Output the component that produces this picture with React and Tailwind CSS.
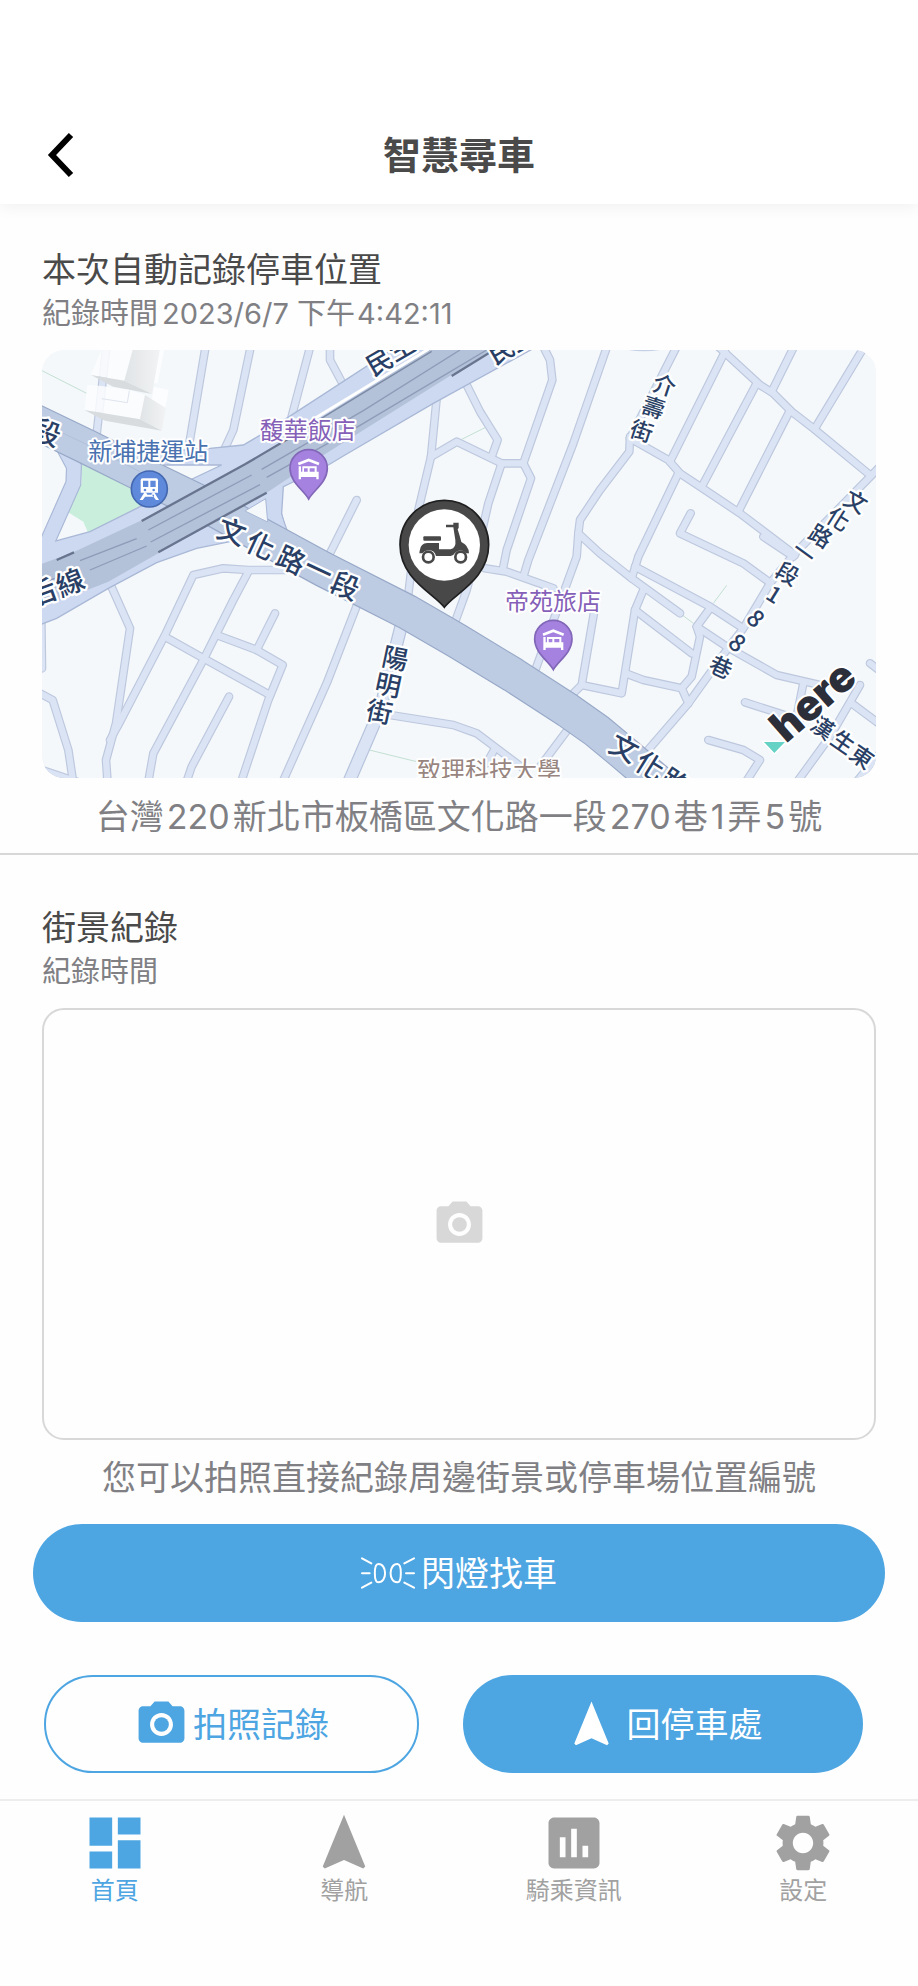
import React from "react";
import {
  MdAssessment,
  MdDashboard,
  MdNavigation,
  MdPhotoCamera,
  MdSettings,
} from "react-icons/md";

const MINOR_STREETS = [
  "525,30 478,310",
  "660,30 610,270 580,335",
  "838,30 785,230",
  "228,30 198,300",
  "900,20 900,60 940,135",
  "1220,175 1203,350 1165,510 1133,780",
  "1203,350 1280,305 1415,370 1480,370",
  "1305,125 1350,215 1403,300 1385,350",
  "1540,20 1560,60 1567,120 1480,370 1503,415 1430,630 1418,690",
  "1415,370 1375,490 1350,600 1310,750 1270,860",
  "1731,20 1630,310 1495,660 1480,710",
  "1800,290 1798,335 1710,450 1650,540 1645,580 1710,640 1805,715 1950,820",
  "1645,580 1640,650 1600,760 1505,1020",
  "980,480 895,650",
  "1940,20 1800,295",
  "2085,35 1920,365",
  "2180,130 2018,435",
  "2278,215 2125,515",
  "2065,20 2190,135 2230,160 2285,215 2350,265 2520,405",
  "2292,20 2225,155",
  "2500,25 2355,265",
  "1800,295 1915,360 1950,400 2010,440 2130,520 2295,645",
  "1945,400 1825,650 1805,715",
  "1982,520 1950,580 2140,670 2220,728",
  "2550,380 2290,645 2220,730 2140,865 2090,930 1975,1090 1850,1235",
  "2200,590 2290,650",
  "1815,680 2040,800 2135,862",
  "1840,750 1815,810 1775,1060 1655,1035",
  "1815,810 1985,940",
  "2040,805 2000,860 2010,890 1985,1010 1955,1045 1975,1090",
  "1787,1000 1840,1020 1955,1045",
  "2000,860 2090,920 2240,1005 2370,1035",
  "2320,1030 2300,1130",
  "2145,1087 2310,1140",
  "2035,1200 2140,1230 2190,1260 2145,1330",
  "2490,1035 2400,1190 2298,1330",
  "2465,1090 2550,1153",
  "2520,970 2560,1000",
  "2550,1240 2480,1325",
  "1365,685 1430,695 1570,745",
  "1695,800 1655,1035 1610,1080",
  "985,785 890,1030 756,1330",
  "1080,1125 1270,1155 1340,1180 1480,1285",
  "1620,1160 1530,1280",
  "1395,1225 1370,1270",
  "242,735 300,865 258,1150 228,1260 233,1330",
  "780,690 655,690 580,685 490,705 405,885 265,1155 240,1200",
  "655,695 610,780 520,960 370,1240 354,1330",
  "405,890 520,955 720,1065",
  "560,885 680,930 758,975 715,1080 632,1330",
  "735,820 680,930",
  "597,1070 485,1280 468,1330",
  "30,1060 68,1080 115,1230 130,1330",
  "34,850 36,985",
  "20,1285 170,1335",
];

const ARTERIAL =
  "0,238 170,320 340,405 560,512 700,590 880,688 1130,815 1280,902 1450,1005 1615,1112 1700,1172 1770,1230 1900,1340";

const LIGHT_ROAD =
  "36,625 70,605 180,575 320,505 480,420 575,375 380,375 380,335 540,325 640,315 700,280 870,170 1100,20 1520,20 1210,190 945,345 895,375 760,440 755,520 770,585 600,605 500,625 380,668 235,745 80,835 20,858 20,625";

const STREET_LABELS = [
  ["段", 50, 278, 20, 84],
  ["后", 36, 757, -20, 84],
  ["線", 120, 727, -22, 84],
  ["民", 1050, 68, -30, 78],
  ["生", 1115, 24, -30, 78],
  ["民", 1415, 34, -30, 78],
  ["生", 1480, -4, -30, 78],
  ["文", 605, 575, 20, 84],
  ["化", 692, 617, 25, 84],
  ["路", 783, 660, 25, 84],
  ["一", 866, 690, 25, 84],
  ["段", 945, 738, 22, 84],
  ["介", 1903, 135, 18, 68],
  ["壽", 1870, 202, 18, 68],
  ["街", 1835, 272, 18, 68],
  ["文", 2478, 484, 30, 68],
  ["化", 2425, 537, 32, 68],
  ["路", 2372, 588, 32, 68],
  ["一", 2322, 638, 36, 68],
  ["段", 2273, 700, 30, 68],
  ["1", 2233, 762, 32, 68],
  ["8", 2177, 835, 45, 72],
  ["8", 2122, 908, 40, 72],
  ["巷", 2073, 981, 24, 68],
  ["陽", 1095, 958, 12, 78],
  ["明", 1074, 1038, 12, 78],
  ["街", 1048, 1118, 12, 78],
  ["文", 1783, 1224, 28, 84],
  ["化", 1860, 1278, 32, 84],
  ["路", 1935, 1328, 34, 84],
  ["漢", 2378, 1162, 35, 68],
  ["生", 2440, 1206, 35, 68],
  ["東", 2496, 1250, 35, 68],
];

function HotelPin({ x, y }) {
  return (
    <g transform={`translate(${x} ${y})`}>
      <path
        d="M0 92 C-14 66 -56 42 -56 0 A56 56 0 0 1 56 0 C56 42 14 66 0 92Z"
        fill="#a582e0"
        stroke="#8266b8"
        strokeWidth="5"
      />
      <path d="M-31 -13 L0 -25 L31 -13" fill="none" stroke="#fff" strokeWidth="8" />
      <path
        d="M-30 33 V-6 H-23 V10 H-19 V-6 H24 V10 H30 V33 H23 V26 H-23 V33Z"
        fill="#fff"
      />
      <path d="M-14 0 H-3 V10 H-14Z M3 0 H18 V10 H3Z" fill="#a582e0" />
    </g>
  );
}

function ParkingMap() {
  return (
    <svg
      role="img"
      aria-label="停車位置地圖"
      viewBox="36 30 2502 1284"
      preserveAspectRatio="xMidYMid slice"
      className="block aspect-[834/428] w-full rounded-[22px] font-['Noto_Sans_CJK_TC',sans-serif]"
    >
      <rect x="36" y="30" width="2502" height="1284" fill="#f4f8fb" />

      <g fill="none" stroke="#c3e0d2" strokeWidth="3">
        <path d="M36 92 L170 160 M1295 298 L1365 263 M2090 736 L2050 790 M1950 820 L1990 850 M1018 1230 L1160 1265" />
      </g>
      <path d="M1795 30 Q1840 38 1890 30Z" fill="#c3d0e6" />

      <g fill="none" stroke="#bdc8de" strokeWidth="26" strokeLinecap="round" strokeLinejoin="round">
        {MINOR_STREETS.map((points) => (
          <polyline key={points} points={points} />
        ))}
      </g>
      <polyline points="1118,840 1050,1110 955,1330" fill="none" stroke="#b6c3dc" strokeWidth="40" />
      <g fill="none" stroke="#dbe4f4" strokeWidth="19" strokeLinecap="round" strokeLinejoin="round">
        {MINOR_STREETS.map((points) => (
          <polyline key={points} points={points} />
        ))}
      </g>
      <polyline points="1118,840 1050,1110 955,1330" fill="none" stroke="#dbe4f4" strokeWidth="33" />

      <path
        d="M155 370 L300 445 L350 488 L175 580 L160 545 L113 516 L155 430Z"
        fill="#c9efdc"
      />

      <g fill="none" stroke="#a9b8d6">
        <polyline points="100,320 132,380 130,430 50,610 30,680" strokeWidth="48" />
        <polyline points="732,420 728,520 752,590" strokeWidth="52" />
      </g>
      <polygon points={LIGHT_ROAD} fill="#cdd9f1" stroke="#a9b8d6" strokeWidth="4" />
      <g fill="none" stroke="#cdd9f1">
        <polyline points="100,320 132,380 130,430 50,610 30,680" strokeWidth="41" />
        <polyline points="732,420 728,520 752,590" strokeWidth="45" />
      </g>

      <g fill="none" strokeLinejoin="round">
        <polyline points={ARTERIAL} stroke="#98a9c8" strokeWidth="108" />
        <polyline points={ARTERIAL} stroke="#becce3" strokeWidth="101" />
      </g>
      <polygon points="645,513 707,476 713,546" fill="#f4f8fb" stroke="#a9b8d6" strokeWidth="3" />
      <path d="M36 250 L180 318 M210 335 L330 395" stroke="#b0bfd8" strokeWidth="3" />

      <polygon
        points="20,677 130,637 335,541 640,375 870,235 1195,30 1215,20 1400,20 870,352 710,458 385,640 235,725 120,770 20,805"
        fill="#b3c1d9"
      />
      <g fill="none" stroke="#8e9cb7" strokeWidth="4">
        <path d="M150 662 L320 596 M180 690 L350 618 M355 570 L665 405 M362 606 L690 434 M695 388 L1000 212 L1290 30 M710 412 L980 262 L1370 30 M36 730 L140 690" />
      </g>
      <g fill="none" stroke="#69758f" strokeWidth="7">
        <path d="M335 543 L645 373 L870 240 M385 637 L710 458 M80 660 L132 637 M1265 108 L1378 38" />
      </g>
      <path d="M850 238 L1195 28" stroke="#fff" strokeWidth="9" />
      <path d="M858 245 L1205 34" stroke="#7d8aa4" strokeWidth="4" />

      <defs>
        <linearGradient id="wall" x1="0" y1="0" x2="1" y2="0">
          <stop offset="0" stopColor="#e1e4e6" />
          <stop offset="1" stopColor="#f1f3f4" />
        </linearGradient>
      </defs>
      <g>
        <polygon points="213,30 308,30 283,122 183,105" fill="#fcfdfe" fillOpacity=".85" />
        <polygon points="308,30 390,30 366,162 283,122" fill="url(#wall)" />
        <polygon points="390,30 402,30 383,130 372,130" fill="#fcfdfe" />
        <polygon points="183,105 283,122 366,162 250,140" fill="#d9dcde" />
        <polygon points="172,135 215,138 300,150 345,165 330,238 163,210" fill="#fcfdfe" fillOpacity=".85" />
        <polygon points="345,165 408,203 395,272 330,238" fill="url(#wall)" />
        <polygon points="372,140 416,150 406,203 366,178" fill="#fcfdfe" />
        <polygon points="163,210 330,238 395,272 225,242" fill="#d9dcde" />
        <path d="M215 176 L292 188 L298 152" fill="none" stroke="#dfe5ee" strokeWidth="3" />
      </g>

      <g
        fill="#2a3f66"
        stroke="#fff"
        strokeWidth="14"
        strokeLinejoin="round"
        paintOrder="stroke"
        textAnchor="middle"
        className="font-medium"
      >
        {STREET_LABELS.map(([char, x, y, angle, size]) => (
          <text
            key={`${x}-${y}`}
            fontSize={size}
            transform={`translate(${x} ${y}) rotate(${angle})`}
            y={size === 84 ? 31 : 26}
          >
            {char}
          </text>
        ))}
      </g>
      <g fontSize="72" stroke="#fff" strokeWidth="12" strokeLinejoin="round" paintOrder="stroke">
        <text x="175" y="360" fill="#4a72b0">新埔捷運站</text>
        <text x="689" y="296" fill="#8560b8">馥華飯店</text>
        <text x="1425" y="809" fill="#8560b8">帝苑旅店</text>
        <text x="1161" y="1318" fill="#98857f">致理科技大學</text>
      </g>

      <circle cx="358" cy="447" r="54" fill="#5f8adb" stroke="#4468b0" strokeWidth="5" />
      <g fill="#fff">
        <path d="M338 415 H378 Q384 415 384 421 V458 H332 V421 Q332 415 338 415Z" />
        <path d="M344 456 L352 462 L338 480 H329Z M372 456 L364 462 L378 480 H387Z M344 464 H372 V470 H344Z" />
        <path d="M339 422 H355 V441 H339Z M361 422 H377 V441 H361Z" fill="#5f8adb" />
        <circle cx="345" cy="450" r="4" fill="#5f8adb" />
        <circle cx="371" cy="450" r="4" fill="#5f8adb" />
      </g>
      <HotelPin x={836} y={385} />
      <HotelPin x={1570} y={897} />

      <path
        d="M1243 802 C1215 762 1110 718 1110 614 A133 133 0 0 1 1376 614 C1376 718 1271 762 1243 802Z"
        fill="#484848"
        stroke="#1f1f1f"
        strokeWidth="5"
      />
      <circle cx="1243" cy="615" r="107" fill="#fff" />
      <g fill="#484848">
        <rect x="1180" y="589" width="53" height="13" rx="3" />
        <path d="M1169 632 Q1172 609 1192 609 H1227 V628 H1262 Q1279 624 1276 600 L1270 562 H1248 V554 H1270 V548 H1286 V564 L1283 568 Q1290 590 1294 606 Q1316 616 1317 640 H1308 Q1292 622 1274 640 Q1270 648 1262 648 H1218 Q1214 630 1195 630 Q1182 632 1177 640 H1168Z" />
      </g>
      <g fill="none" stroke="#484848" strokeWidth="8">
        <circle cx="1195" cy="651" r="16" />
        <circle cx="1292" cy="651" r="16" />
      </g>

      <polygon points="2197,1204 2270,1204 2233,1242" fill="#66d1c5" stroke="#fff" strokeWidth="4" />
      <text
        transform="translate(2268 1212) rotate(-41)"
        fontSize="128"
        fill="#2c2e3a"
        stroke="#fff"
        strokeWidth="12"
        paintOrder="stroke"
        className="font-[Inter] font-black"
      >
        here
      </text>
    </svg>
  );
}

function FlashIcon() {
  return (
    <svg
      viewBox="18 22 162 96"
      className="h-8 w-[54px]"
      fill="none"
      stroke="currentColor"
      strokeWidth="6"
      strokeLinecap="round"
      aria-hidden="true"
    >
      <path d="M21 26 L49 41 M21 71 H44 M21 114 L49 99" />
      <path d="M177 26 L148 41 M177 71 H153 M177 114 L148 99" />
      <path d="M70 43 C97 43 97 98 70 98 C56 98 56 43 70 43Z" />
      <path d="M127 43 C100 43 100 98 127 98 C141 98 141 43 127 43Z" />
    </svg>
  );
}

function SectionHeading({ title, children }) {
  return (
    <>
      <h2 className="text-[34px] leading-[44px] text-[#4a4a4a]">{title}</h2>
      <p className="text-[29px] leading-[44px] text-[#808084]">{children}</p>
    </>
  );
}

const NAV_ITEMS = [
  { label: "首頁", icon: MdDashboard, active: true },
  { label: "導航", icon: MdNavigation },
  { label: "騎乘資訊", icon: MdAssessment },
  { label: "設定", icon: MdSettings },
];

export default function App() {
  return (
    <div className="flex min-h-screen flex-col bg-[#fefefe] font-[Inter,'Noto_Sans_CJK_TC',sans-serif]">
      <header className="grid grid-cols-[1fr_auto_1fr] items-center bg-white px-[42px] pt-[131px] pb-[25px] shadow-[0_4px_14px_rgba(0,0,0,0.05)]">
        <button type="button" aria-label="返回" className="flex h-12 w-9 items-center">
          <svg viewBox="0 0 36 48" className="h-12 w-9" fill="none" stroke="#000" strokeWidth="6" aria-hidden="true">
            <path d="M29 4 L10 24 L29 44" />
          </svg>
        </button>
        <h1 className="text-[38px] leading-[48px] font-bold text-[#4a4a4a]">智慧尋車</h1>
      </header>

      <main className="flex-1">
        <section className="border-b-2 border-[#d8d8d8] px-[42px] pt-11 pb-[14px]">
          <SectionHeading title="本次自動記錄停車位置">
            紀錄時間<span className="ml-1">2023/6/7</span> 下午<span className="ml-0.5">4:42:11</span>
          </SectionHeading>
          <div className="mt-[14px]">
            <ParkingMap />
          </div>
          <p className="mt-[17px] text-center text-[34px] leading-[44px] text-[#808084]">
            台灣<span className="mx-[3px]">220</span>新北市板橋區文化路一段<span className="mx-[3px]">270</span>
            巷<span className="mx-[3px]">1</span>弄<span className="mx-[3px]">5</span>號
          </p>
        </section>

        <section className="px-[42px] pt-[51px]">
          <SectionHeading title="街景紀錄">紀錄時間</SectionHeading>
          <div className="mt-[14px] flex aspect-[834/432] w-full items-center justify-center rounded-[22px] border-2 border-[#d8d8d8]">
            <MdPhotoCamera className="size-[55px] text-[#d8d8d8]" aria-hidden="true" />
          </div>
          <p className="mt-4 text-center text-[34px] leading-[44px] text-[#808084]">
            您可以拍照直接紀錄周邊街景或停車場位置編號
          </p>
        </section>

        <div className="mt-6 px-[33px]">
          <button
            type="button"
            className="flex h-[98px] w-full items-center justify-center gap-[6px] rounded-full bg-[#4da5e2] text-[34px] text-white"
          >
            <FlashIcon />
            閃燈找車
          </button>
        </div>
        <div className="mt-[53px] mb-[26px] grid grid-cols-[375fr_400fr] gap-11 pr-[55px] pl-11">
          <button
            type="button"
            className="flex h-[98px] items-center justify-center gap-1 rounded-full border-2 border-[#4da5e2] text-[34px] text-[#4da5e2]"
          >
            <MdPhotoCamera className="size-[55px]" aria-hidden="true" />
            拍照記錄
          </button>
          <button
            type="button"
            className="flex h-[98px] items-center justify-center gap-2 rounded-full bg-[#4da5e2] text-[34px] text-white"
          >
            <MdNavigation className="size-[55px]" aria-hidden="true" />
            回停車處
          </button>
        </div>
      </main>

      <nav className="grid grid-cols-4 border-t-2 border-[#ededed] pt-2 pb-[81px]">
        {NAV_ITEMS.map(({ label, icon: Icon, active }) => (
          <a
            key={label}
            href="#"
            aria-current={active ? "page" : undefined}
            className={`flex flex-col items-center text-2xl leading-7 ${active ? "text-[#4da5e2]" : "text-[#a1a1a1]"}`}
          >
            <Icon className="size-[68px]" aria-hidden="true" />
            {label}
          </a>
        ))}
      </nav>
    </div>
  );
}
